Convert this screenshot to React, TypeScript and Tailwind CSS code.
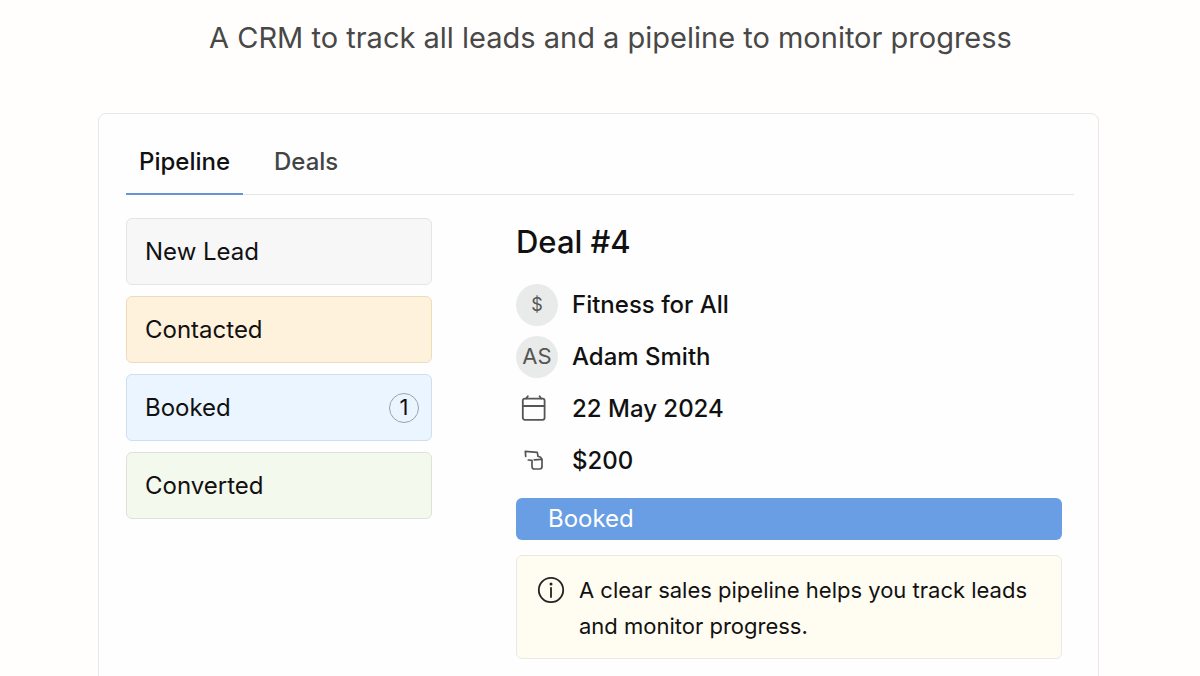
import { useState } from "react";
import type { ReactNode } from "react";

const tabs = ["Pipeline", "Deals"];

const stages = [
  { label: "New Lead", color: "bg-[#f7f7f7] border-[#e3e4e4]" },
  { label: "Contacted", color: "bg-[#fff2dd] border-[#ecdcbc]" },
  { label: "Booked", color: "bg-[#ebf5ff] border-[#cfdfee]", count: 1 },
  { label: "Converted", color: "bg-[#f3f9ed] border-[#dbe3da]" },
];

function CalendarIcon() {
  return (
    <svg
      className="w-7 h-7 text-[#555]"
      viewBox="0 0 28 28"
      fill="none"
      stroke="currentColor"
      strokeWidth="1.8"
      strokeLinecap="round"
      aria-hidden="true"
    >
      <rect x="2.8" y="3.6" width="21.8" height="21.2" rx="2" />
      <path d="M3 11h21.4M6.2 3.6l1.6-2.4M21.2 3.6l-1.6-2.4" />
    </svg>
  );
}

function AmountIcon() {
  return (
    <svg
      className="w-7 h-7 text-[#555]"
      viewBox="0 0 28 28"
      fill="none"
      stroke="currentColor"
      strokeWidth="1.7"
      strokeLinecap="round"
      strokeLinejoin="round"
      aria-hidden="true"
    >
      <path d="M5.7 9.4L5.3 4.3l12 1 .7 4 2.6.9L22 12.4v7.2q0 2.4-2.4 2.4h-5.2Q12 22 12 19.6v-6.2l-3.7-.4" />
      <path d="M14.2 12.8l7.6-.4" />
    </svg>
  );
}

function InfoIcon() {
  return (
    <svg
      className="w-7 h-7 shrink-0 mt-1 text-[#222]"
      viewBox="0 0 28 28"
      fill="none"
      stroke="currentColor"
      strokeWidth="1.8"
      aria-hidden="true"
    >
      <circle cx="14" cy="14" r="12.2" />
      <path d="M14 12v9" strokeLinecap="round" />
      <circle cx="14" cy="8" r="1.5" fill="currentColor" stroke="none" />
    </svg>
  );
}

function Avatar({ children }: { children: ReactNode }) {
  return (
    <span className="w-[42px] h-[42px] rounded-full bg-[#e9eaea] text-[#555] flex items-center justify-center">
      {children}
    </span>
  );
}

function DetailRow({ icon, text }: { icon: ReactNode; text: string }) {
  return (
    <li className="flex items-center gap-[14px] h-[42px]">
      <span className="w-[42px] shrink-0 flex">{icon}</span>
      <span className="font-medium">{text}</span>
    </li>
  );
}

export default function App() {
  const [activeTab, setActiveTab] = useState("Pipeline");

  return (
    <main className="min-h-screen bg-[#fffefc] pl-[98px] pr-[101px] pt-5 font-['Inter',sans-serif] text-2xl text-[#111]">
      <h1 className="pl-6 text-center text-[29px] leading-9 text-[#484848]">
        A CRM to track all leads and a pipeline to monitor progress
      </h1>

      <section className="mt-[57px] rounded-lg border border-[#e8e8e8] bg-[#fefefe] pl-[27px] pr-6 pb-10">
        <div role="tablist" className="flex gap-[18px] border-b border-[#e6e6e6]">
          {tabs.map((tab) => (
            <button
              key={tab}
              role="tab"
              aria-selected={activeTab === tab}
              onClick={() => setActiveTab(tab)}
              className={`h-[81px] -mb-px px-[13px] pt-4 border-b-2 font-medium ${
                activeTab === tab
                  ? "border-[#6495db] text-[#111]"
                  : "border-transparent text-[#444]"
              }`}
            >
              {tab}
            </button>
          ))}
        </div>

        <div className="mt-[23px] flex gap-[84px] pr-3">
          {/* Stages */}
          <ul className="w-[306px] shrink-0 flex flex-col gap-[11px]">
            {stages.map((stage) => (
              <li
                key={stage.label}
                className={`h-[67px] flex items-center justify-between rounded-md border pl-[18px] pr-3 ${stage.color}`}
              >
                {stage.label}
                {stage.count && (
                  <span className="w-[30px] h-[30px] rounded-full border border-[#9aa3ad] flex items-center justify-center text-[22px]">
                    {stage.count}
                  </span>
                )}
              </li>
            ))}
          </ul>

          {/* Deal */}
          <div className="flex-1 min-w-0">
            <h2 className="mt-1 text-[31px] leading-10 font-medium">Deal #4</h2>
            <ul className="mt-[22px] flex flex-col gap-[10px]">
              <DetailRow
                icon={
                  <Avatar>
                    <span className="text-lg">$</span>
                  </Avatar>
                }
                text="Fitness for All"
              />
              <DetailRow
                icon={
                  <Avatar>
                    <span className="text-[22px]">AS</span>
                  </Avatar>
                }
                text="Adam Smith"
              />
              <DetailRow
                icon={
                  <span className="pl-1">
                    <CalendarIcon />
                  </span>
                }
                text="22 May 2024"
              />
              <DetailRow
                icon={
                  <span className="pl-1">
                    <AmountIcon />
                  </span>
                }
                text="$200"
              />
            </ul>

            <button className="mt-4 block w-full h-[42px] rounded-md bg-[#699de4] pl-8 text-left text-white">
              Booked
            </button>

            <div className="mt-[15px] flex gap-[14px] rounded-md border border-[#ebe9e0] bg-[#fffcf2] pl-5 pr-4 pt-4 pb-[14px]">
              <InfoIcon />
              <p className="text-[22px] leading-9">
                A clear sales pipeline helps you track leads and monitor progress.
              </p>
            </div>
          </div>
        </div>
      </section>
    </main>
  );
}
